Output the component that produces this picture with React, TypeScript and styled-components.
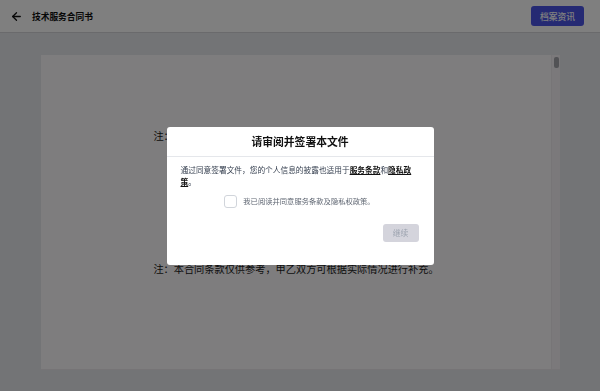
import React from 'react';
import styled, { createGlobalStyle } from 'styled-components';
import { ArrowLeft } from 'lucide-react';

const GlobalStyle = createGlobalStyle`
  html, body {
    margin: 0;
    padding: 0;
    height: 100%;
  }
  body {
    font-family: 'Noto Sans CJK SC', 'Noto Sans', sans-serif;
    background: #e6e8ec;
    overflow: hidden;
  }
`;

export default function App() {
  return (
    <>
      <GlobalStyle />
      <Page>
        <Header>
          <HeaderLeft>
            <BackButton>
              <ArrowLeft size={13} strokeWidth={2.4} />
            </BackButton>
            <Title>技术服务合同书</Title>
          </HeaderLeft>
          <PrimaryButton>档案资讯</PrimaryButton>
        </Header>
        <Main>
          <Viewer>
            <Paper>
              <Note>注：本合同一式两份，甲乙双方各执一份，具有同等法律效力。</Note>
              <Note $gap>注：本合同条款仅供参考，甲乙双方可根据实际情况进行补充。</Note>
            </Paper>
            <ScrollTrack>
              <ScrollThumb />
            </ScrollTrack>
          </Viewer>
        </Main>
      </Page>

      <Overlay>
        <Dialog>
          <DialogTitle>请审阅并签署本文件</DialogTitle>
          <DialogBody>
            <Intro>
              通过同意签署文件，您的个人信息的披露也适用于<Link>服务条款</Link>和<Link>隐私政策</Link>。
            </Intro>
            <CheckRow>
              <Checkbox />
              <CheckLabel>我已阅读并同意服务条款及隐私权政策。</CheckLabel>
            </CheckRow>
            <Actions>
              <ContinueButton disabled>继续</ContinueButton>
            </Actions>
          </DialogBody>
        </Dialog>
      </Overlay>
    </>
  );
}

const Page = styled.div`
  display: flex;
  flex-direction: column;
  height: 100vh;
`;

const Header = styled.header`
  flex: none;
  height: 32px;
  display: flex;
  align-items: center;
  justify-content: space-between;
  padding: 0 16px 0 10px;
  background: #ffffff;
  border-bottom: 1px solid #d4d4d8;
`;

const HeaderLeft = styled.div`
  display: flex;
  align-items: center;
  gap: 9px;
`;

const BackButton = styled.span`
  display: flex;
  color: #111111;
`;

const Title = styled.h1`
  margin: 0;
  font-size: 8.7px;
  font-weight: 700;
  color: #111111;
`;

const PrimaryButton = styled.button`
  width: 53px;
  height: 20px;
  border: none;
  border-radius: 3px;
  background: #4a55e6;
  color: #ffffff;
  font-family: inherit;
  font-size: 8.8px;
  font-weight: 500;
  padding: 0;
`;

const Main = styled.main`
  flex: 1;
  padding: 22px 40px 21px 41px;
  display: flex;
`;

const Viewer = styled.div`
  flex: 1;
  display: flex;
  border-bottom: 1px solid #ece8ec;
`;

const Paper = styled.div`
  flex: 1;
  background: #fdfafd;
  padding-top: 73px;
  display: flex;
  flex-direction: column;
  align-items: center;
`;

const Note = styled.p<{ $gap?: boolean }>`
  margin: ${p => (p.$gap ? '118px' : '0')} 0 0;
  font-family: 'Noto Sans CJK SC', serif;
  font-size: 10.2px;
  line-height: 15px;
  color: #1a1a1a;
`;

const ScrollTrack = styled.div`
  flex: none;
  width: 8px;
  background: #f6f3f6;
  border-left: 1px solid #eeeaee;
  display: flex;
  justify-content: center;
  padding-top: 2px;
`;

const ScrollThumb = styled.div`
  width: 5px;
  height: 11px;
  border-radius: 2px;
  background: #a4a4aa;
`;

const Overlay = styled.div`
  position: fixed;
  inset: 0;
  background: rgba(0, 0, 0, 0.5);
  display: flex;
  align-items: center;
  justify-content: center;
`;

const Dialog = styled.div`
  width: 267px;
  background: #ffffff;
  border-radius: 3px;
  overflow: hidden;
`;

const DialogTitle = styled.h2`
  margin: 0;
  height: 29px;
  display: flex;
  align-items: center;
  justify-content: center;
  border-bottom: 1px solid #e5e7eb;
  font-size: 10.8px;
  font-weight: 600;
  color: #111111;
`;

const DialogBody = styled.div`
  padding: 7px 15px 23px 14px;
`;

const Intro = styled.p`
  margin: 0;
  font-size: 7.7px;
  line-height: 12px;
  color: #374151;
`;

const Link = styled.a`
  color: #111111;
  font-weight: 700;
  text-decoration: underline;
`;

const CheckRow = styled.label`
  margin-top: 7px;
  display: flex;
  align-items: center;
  justify-content: center;
  gap: 6px;
`;

const Checkbox = styled.span`
  width: 13px;
  height: 13px;
  box-sizing: border-box;
  border: 1px solid #d1d5db;
  border-radius: 3px;
  background: #ffffff;
`;

const CheckLabel = styled.span`
  font-size: 7.3px;
  color: #5f6672;
`;

const Actions = styled.div`
  margin-top: 16px;
  display: flex;
  justify-content: flex-end;
`;

const ContinueButton = styled.button`
  width: 36px;
  height: 18px;
  padding: 0;
  border: none;
  border-radius: 3px;
  background: #d4d4dc;
  color: #9ca3af;
  font-family: inherit;
  font-size: 7.8px;
`;
